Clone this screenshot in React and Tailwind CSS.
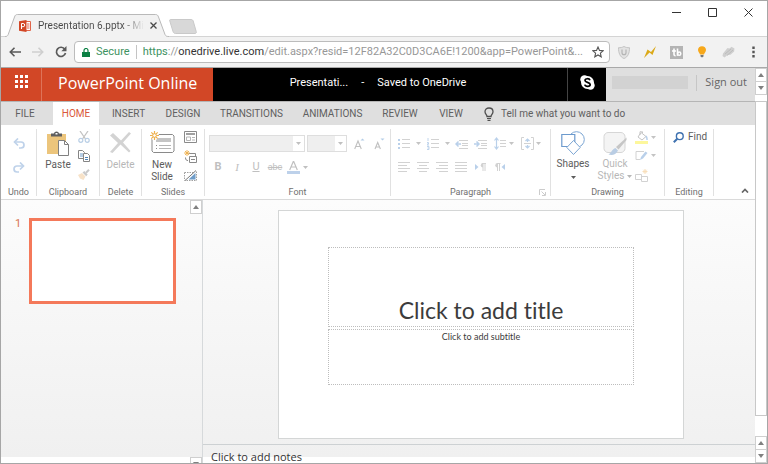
import { clsx } from "clsx"

const ribbonTabs = [
  { name: "FILE", width: "w-12" },
  { name: "HOME", width: "w-[46px]", active: true },
  { name: "INSERT", width: "w-[51px]" },
  { name: "DESIGN", width: "w-[50px]" },
  { name: "TRANSITIONS", width: "w-[79px]" },
  { name: "ANIMATIONS", width: "w-[75px]" },
  { name: "REVIEW", width: "w-[52px]" },
  { name: "VIEW", width: "w-[42px]" },
]

function Icon({ w, h, label, className, children }) {
  return (
    <svg
      width={w}
      height={h}
      viewBox={`0 0 ${w} ${h}`}
      fill="none"
      role={label ? "img" : undefined}
      aria-label={label}
      aria-hidden={label ? undefined : true}
      className={clsx("block shrink-0", className)}
    >
      {children}
    </svg>
  )
}

function Caret({ className }) {
  return (
    <Icon w={5} h={3} className={className}>
      <path d="M0 0h5L2.5 3z" fill="currentColor" />
    </Icon>
  )
}

function IconButton({ label, className, children }) {
  return (
    <button type="button" aria-label={label} className={clsx("flex shrink-0 items-center justify-center", className)}>
      {children}
    </button>
  )
}

function ScrollButton({ up, className }) {
  return (
    <button
      type="button"
      aria-label={up ? "Scroll up" : "Scroll down"}
      className={clsx("flex h-[14px] w-3 shrink-0 items-center justify-center border border-[#cfcfcf] bg-white", className)}
    >
      <Icon w={6} h={4}>
        <path d={up ? "M0 4h6L3 0z" : "M0 0h6L3 4z"} fill="#808080" />
      </Icon>
    </button>
  )
}

function PowerPointIcon() {
  return (
    <Icon w={13} h={12} className="mr-1.5">
      <path d="M6 1.500h5.500v9H6z" fill="#fff" stroke="#e0654a" />
      <path d="M8 4h2.500M8 6h2.500M8 8h2.500" stroke="#e0654a" />
      <path d="M0 1.200 7.500 0v12L0 10.800z" fill="#d24726" />
      <path d="M2.500 9V3.500h1.600a1.500 1.500 0 0 1 0 3.200H2.500" stroke="#fff" />
    </Icon>
  )
}

function TitleBar() {
  return (
    <div className="flex h-9 items-end border-b border-[#d4d4d4] bg-white pl-1">
      <div className="relative -mb-px flex h-[23px] w-[164px] items-center pl-[14px]">
        <svg viewBox="0 0 164 23" width="164" height="23" className="absolute inset-0" aria-hidden="true">
          <path d="M0 22.500c2 0 2.500-.5 3.200-2L9.500 3C10.200 1 11 .5 12.500.5h138c1.500 0 2.300.5 3 2.500l6.500 17.500c.7 1.500 1.500 2 4 2V23H0z" fill="#f2f2f2" />
          <path d="M0 22.500c2 0 2.500-.5 3.200-2L9.500 3C10.200 1 11 .5 12.500.5h138c1.500 0 2.300.5 3 2.500l6.500 17.500c.7 1.500 1.500 2 4 2" fill="none" stroke="#b9b9b9" />
        </svg>
        <div className="relative flex items-center">
          <PowerPointIcon />
          <span className="w-[106px] bg-linear-to-r from-[#484848] from-80% to-transparent bg-clip-text text-[10px] leading-4 whitespace-nowrap text-transparent">
            Presentation 6.pptx - Mic
          </span>
          <IconButton label="Close tab" className="ml-1.5">
            <Icon w={7} h={7}>
              <path d="m.5.500 6 6m0-6-6 6" stroke="#4a4a4a" strokeWidth="1.300" />
            </Icon>
          </IconButton>
        </div>
      </div>
      <IconButton label="New tab" className="mb-0.5">
        <Icon w={28} h={15}>
          <path d="M.8 2C.3 1 .8.500 2 .500h20c1.200 0 1.800.500 2.200 1.500l3 10.500c.4 1.200 0 2-1.200 2H6.500c-1.300 0-2-.6-2.400-1.700z" fill="#d8d8d8" stroke="#c9c9c9" />
        </Icon>
      </IconButton>
      <div className="mr-[14px] mb-[19px] ml-auto flex items-center gap-[27px]">
        <IconButton label="Minimize">
          <Icon w={9} h={9}>
            <path d="M0 4.500h9" stroke="#333" />
          </Icon>
        </IconButton>
        <IconButton label="Maximize">
          <Icon w={9} h={9}>
            <path d="M.5.500h8v8h-8z" stroke="#333" />
          </Icon>
        </IconButton>
        <IconButton label="Close">
          <Icon w={9} h={9}>
            <path d="m.5.500 8 8m0-8-8 8" stroke="#333" />
          </Icon>
        </IconButton>
      </div>
    </div>
  )
}

function AddressBar() {
  return (
    <div className="flex h-[31px] items-center border-b border-[#a9a9a9] bg-[#f2f2f2] pl-2">
      <div className="flex w-[65px] items-center gap-[11px]">
        <IconButton label="Back">
          <Icon w={12} h={10}>
            <path d="M12 5H1.500M5.500.8 1.300 5l4.200 4.200" stroke="#5a5a5a" strokeWidth="1.600" />
          </Icon>
        </IconButton>
        <IconButton label="Forward">
          <Icon w={12} h={10}>
            <path d="M0 5h10.500M6.500.8 10.700 5 6.500 9.200" stroke="#cfcfcf" strokeWidth="1.600" />
          </Icon>
        </IconButton>
        <IconButton label="Reload">
          <Icon w={12} h={12}>
            <path d="M9.800 3.200A4.600 4.600 0 1 0 10.500 7" stroke="#5a5a5a" strokeWidth="1.700" />
            <path d="M11.500 0v5.200H6.300z" fill="#5a5a5a" />
          </Icon>
        </IconButton>
      </div>
      <div className="flex h-[22px] min-w-0 flex-1 items-center rounded-sm border border-[#bcbcbc] bg-white px-[5px]">
        <Icon w={8} h={9} className="mr-1.5 ml-0.5">
          <path d="M0 4h8v5H0z" fill="#0b8043" />
          <path d="M2 4V2.500a2 2 0 0 1 4 0V4" stroke="#0b8043" strokeWidth="1.200" />
        </Icon>
        <span className="text-[11px] text-[#3d9261]">Secure</span>
        <span className="mx-[6px] h-3.5 w-px bg-[#c4c4c4]" />
        <span className="min-w-0 flex-1 overflow-hidden text-[11px] whitespace-nowrap text-[#979797]">
          <span className="text-[#3d9261]">https</span>://<span className="text-[#333]">onedrive.live.com</span>
          /edit.aspx?resid=12F82A32C0D3CA6E!1200&amp;app=PowerPoint&amp;...
        </span>
        <IconButton label="Bookmark this page">
          <Icon w={12} h={12}>
            <path d="m6 1 1.500 3.400 3.600.4-2.700 2.400.8 3.600L6 9l-3.200 1.800.8-3.600L.9 4.800l3.600-.4z" stroke="#555" strokeWidth="1.100" />
          </Icon>
        </IconButton>
      </div>
      <div className="flex items-center pr-3 pl-[7px]">
        <IconButton label="Shield" className="w-[14px]">
          <Icon w={12} h={13}>
            <path d="M6 .5c1.600 1 3.500 1.300 5.500 1.200C11.500 7 10 11 6 12.500 2 11 .5 7 .5 1.700 2.500 1.800 4.400 1.500 6 .5z" fill="#e3e3e3" stroke="#c3c3c3" />
            <path d="M4 3.500v3.200c0 2.600 4 2.600 4 0V3.500" stroke="#b5b5b5" strokeWidth="1.200" />
          </Icon>
        </IconButton>
        <IconButton label="Lightning" className="ml-3 w-[14px]">
          <Icon w={12} h={12}>
            <path d="m0 12 3.500-8.500L7 6 12 0 8.500 9 5.500 6.500z" fill="#dba918" />
          </Icon>
        </IconButton>
        <IconButton label="Toolbox" className="ml-3 w-[14px]">
          <Icon w={13} h={13}>
            <path d="M0 0h13v13H0z" fill="#b4b4b4" />
            <path d="M4 2.500v6c0 1 .6 1.200 1.600 1.200M2 5h4" stroke="#fff" strokeWidth="1.600" />
            <path d="M7.500 2.500V9.800" stroke="#fff" strokeWidth="1.600" />
            <circle cx="9.200" cy="7.700" r="1.600" stroke="#fff" strokeWidth="1.500" />
          </Icon>
        </IconButton>
        <IconButton label="Bulb" className="ml-3 w-[14px]">
          <Icon w={10} h={12}>
            <path d="M5 .3c2.400 0 4 1.500 4 3.600C9 6 7.200 6.800 7 8.500H3C2.800 6.800 1 6 1 3.900 1 1.800 2.600.3 5 .3z" fill="#f7a81b" />
            <path d="M3.500 9h3v1.500l-1.500 1-1.500-1z" fill="#777" />
          </Icon>
        </IconButton>
        <IconButton label="Plug-in" className="ml-3 w-[14px]">
          <Icon w={13} h={12}>
            <path d="M1 7.500 5.500 2l2 .5L9.500.8l3 1.700-.4 3-3.600 3.200L5.500 9l-3 2.500L.5 10z" fill="#cfcfcf" />
            <path d="m3 8 6-5M5 9.500 11 4" stroke="#bdbdbd" />
          </Icon>
        </IconButton>
        <IconButton label="Menu" className="ml-[17px]">
          <Icon w={3} h={12}>
            <path d="M.3.500h2.400v2.400H.3zM.3 4.800h2.400v2.400H.3zM.3 9.100h2.400v2.400H.3z" fill="#555" />
          </Icon>
        </IconButton>
      </div>
    </div>
  )
}

function AppHeader() {
  return (
    <header className="flex h-[34px] border-b border-[#b5b5b5] bg-[#dfdfdf] text-white">
      <div className="flex w-[212px] shrink-0 bg-[#d24726]">
        <IconButton label="App launcher" className="w-[41px] border-r border-[#de7359] pb-1.5">
          <Icon w={13} h={13}>
            <path
              d="M0 0h3v3H0zM5 0h3v3H5zM10 0h3v3h-3zM0 5h3v3H0zM5 5h3v3H5zM10 5h3v3h-3zM0 10h3v3H0zM5 10h3v3H5zM10 10h3v3h-3z"
              fill="#fff"
            />
          </Icon>
        </IconButton>
        <h1 className="self-center pb-1 pl-4 font-['Open_Sans',sans-serif] text-[16px] leading-5 whitespace-nowrap">PowerPoint Online</h1>
      </div>
      <div className="flex min-w-0 flex-1 items-center justify-center gap-[13px] bg-black pr-6 pb-0.5 text-[11px] whitespace-nowrap">
        <span>Presentati...</span>
        <span>-</span>
        <span>Saved to OneDrive</span>
      </div>
      <IconButton label="Skype" className="w-[39px] border-l border-[#444] bg-black pb-1">
        <Icon w={15} h={15}>
          <circle cx="4.500" cy="4.500" r="4.200" fill="#fff" />
          <circle cx="10.500" cy="10.500" r="4.200" fill="#fff" />
          <circle cx="7.500" cy="7.500" r="6.500" fill="#fff" />
          <path d="M10 5.200C9.400 3.200 5 3.200 5 5.400c0 2.300 5.200 1.600 5.200 4.100 0 2.400-4.900 2.400-5.400.1" stroke="#000" strokeWidth="1.700" />
        </Icon>
      </IconButton>
      <div className="flex w-[149px] shrink-0 items-center pr-2 pb-1 pl-1.5 text-[11px] text-[#666]">
        <span className="h-[13px] flex-1 bg-[#d2d2d2]" />
        <span className="mx-2 h-4 w-px bg-[#c6c6c6]" />
        <a href="#signout" className="font-['Open_Sans',sans-serif] whitespace-nowrap">Sign out</a>
      </div>
    </header>
  )
}

function RibbonTabs() {
  return (
    <nav className="flex h-[23px] gap-1 bg-[#dfdfdf] text-[10px] text-[#606060]">
      {ribbonTabs.map((tab) => (
        <button
          key={tab.name}
          type="button"
          className={clsx("flex shrink-0 items-center justify-center", tab.width, tab.active && "bg-white text-[#d9583b]")}
        >
          {tab.name}
        </button>
      ))}
      <button type="button" className="ml-2 flex items-center gap-[7px] whitespace-nowrap">
        <Icon w={10} h={14}>
          <path d="M3 9.500C3 7.500 1 7 1 4.700 1 2.500 2.700 1 5 1s4 1.500 4 3.700C9 7 7 7.500 7 9.500z" stroke="#4f4f4f" strokeWidth="1.300" />
          <path d="M3 11.500h4M3.500 13.300h3" stroke="#4f4f4f" strokeWidth="1.200" />
        </Icon>
        Tell me what you want to do
      </button>
    </nav>
  )
}

function Group({ name, width, launcher, children }) {
  return (
    <section aria-label={name} className={clsx("relative flex shrink-0 flex-col border-r border-[#e1e1e1]", width)}>
      <div className="flex-1">{children}</div>
      <div className="text-center text-[9px] leading-2 whitespace-nowrap text-[#707070]">{name}</div>
      {launcher && (
        <IconButton label={`${name} options`} className="absolute right-1 bottom-0">
          <Icon w={7} h={7}>
            <path d="M.5 6V.5H6M2.500 2.500 6 6M6.500 3v3.500H3" stroke="#ccc" />
          </Icon>
        </IconButton>
      )}
    </section>
  )
}

function PasteIcon() {
  return (
    <Icon w={24} h={25}>
      <path d="M1 3h19v20H1z" fill="#ecc57c" />
      <path d="M5 2.500h3C8.300-.3 12.700-.3 13 2.500h3v3H5z" fill="#5f5f5f" />
      <path d="M9.500 2h2v1.500h-2z" fill="#fff" />
      <path d="M12.500 9.500h6l4 4v11h-10z" fill="#fff" stroke="#808080" />
      <path d="M18.500 9.500v4h4" stroke="#808080" />
    </Icon>
  )
}

function CutIcon() {
  return (
    <Icon w={12} h={12}>
      <path d="m2 0 5.500 8M10 0 4.500 8" stroke="#c3c3c3" strokeWidth="1.300" />
      <circle cx="2.800" cy="9.300" r="2" stroke="#b9cfe6" strokeWidth="1.200" />
      <circle cx="9.200" cy="9.300" r="2" stroke="#b9cfe6" strokeWidth="1.200" />
    </Icon>
  )
}

function CopyIcon() {
  return (
    <Icon w={12} h={12}>
      <path d="M.5.500h4l2 2v6h-6z" fill="#fff" stroke="#858585" />
      <path d="M2 4h3M2 6h3" stroke="#6b9aca" />
      <path d="M5.500 3.500h4l2 2v6h-6z" fill="#fff" stroke="#858585" />
      <path d="M7 7.500h3M7 9.500h3" stroke="#4e83b8" />
    </Icon>
  )
}

function PainterIcon() {
  return (
    <Icon w={12} h={11}>
      <path d="m0 6 4-2 3.500 3.500L5.500 11 2 9.500z" fill="#f7e2c8" />
      <path d="m4.500 3.500 3.700 3.700 1.500-1.700L6.300 2z" fill="#c9c9c9" />
      <path d="m8 3.700 3-3" stroke="#c9c9c9" strokeWidth="2" />
    </Icon>
  )
}

function NewSlideIcon() {
  return (
    <Icon w={25} h={22}>
      <path d="M2.500 3.500h20l1.500 1.500v15l-1.500 1.500H3.500L2 20V5z" fill="#fff" stroke="#8a8a8a" />
      <path d="M6 7h15v4H6z" fill="#c4c4c4" />
      <path d="M9 14.500h12M9 17.500h12" stroke="#b5b5b5" />
      <path d="M6 14.500h1M6 17.500h1" stroke="#8a8a8a" />
      <circle cx="4.500" cy="4.500" r="4.500" fill="#fff" />
      <path d="M4.500 0v9M0 4.500h9M1.300 1.300l6.400 6.400M7.700 1.300 1.300 7.700" stroke="#eeb04d" strokeWidth="1.200" />
      <circle cx="4.500" cy="4.500" r="1.800" fill="#fff" stroke="#eeb04d" />
    </Icon>
  )
}

function LayoutIcon() {
  return (
    <Icon w={13} h={12}>
      <path d="M.5.500h12v11H.5z" fill="#fff" stroke="#8a8a8a" />
      <path d="M2 2h9v2H2z" fill="#a0a0a0" />
      <path d="M2.500 6h4v3.500h-4z" stroke="#b5b5b5" />
      <path d="M8 6.500h3M8 9h3" stroke="#b5b5b5" />
    </Icon>
  )
}

function ResetIcon() {
  return (
    <Icon w={13} h={13}>
      <path d="M4.500 3.500h7v3M5.500 6.500h7v6h-7z" fill="#fff" stroke="#8a8a8a" />
      <path d="M7 9.500h4" stroke="#8a8a8a" />
      <path d="M3 0v6M0 3h6M1 1l4 4M5 1 1 5" stroke="#eeb04d" strokeWidth=".9" />
      <path d="M1.500 7.500C1.500 10 2.500 10.500 4 10.500" stroke="#8a8a8a" />
    </Icon>
  )
}

function HideIcon() {
  return (
    <Icon w={13} h={11}>
      <path d="M.5 2.500h9M.5 2.500v8h12V1" stroke="#a0a0a0" strokeDasharray="1.500 1" />
      <path d="M11.500 3v6.500h-7z" fill="#6f9cc8" />
      <path d="M1 10.500 12 .5" stroke="#777" />
    </Icon>
  )
}

function UndoGroup() {
  return (
    <Group name="Undo" width="w-[36px]">
      <div className="flex flex-col items-center gap-[13px] pt-[9px]">
        <IconButton label="Undo">
          <Icon w={12} h={11}>
            <path d="M1.500 4H8c4 0 4 6 0 6H6" stroke="#bfd2ea" strokeWidth="1.700" />
            <path d="M5 .5 1.500 4 5 7.500" stroke="#bfd2ea" strokeWidth="1.700" />
          </Icon>
        </IconButton>
        <IconButton label="Redo">
          <Icon w={12} h={11}>
            <path d="M10.500 4H4C0 4 0 10 4 10h2" stroke="#bfd2ea" strokeWidth="1.700" />
            <path d="M7 .5 10.500 4 7 7.500" stroke="#bfd2ea" strokeWidth="1.700" />
          </Icon>
        </IconButton>
      </div>
    </Group>
  )
}

function ClipboardGroup() {
  return (
    <Group name="Clipboard" width="w-[63px]">
      <div className="flex justify-center gap-2 pt-0.5">
        <button type="button" className="flex w-6 flex-col items-center gap-[3px] text-[10px] leading-3">
          <PasteIcon />
          Paste
        </button>
        <div className="flex flex-col gap-[7px]">
          <IconButton label="Cut"><CutIcon /></IconButton>
          <IconButton label="Copy"><CopyIcon /></IconButton>
          <IconButton label="Format painter"><PainterIcon /></IconButton>
        </div>
      </div>
    </Group>
  )
}

function SlidesGroup() {
  return (
    <Group name="Slides" width="w-[63px]">
      <div className="flex justify-center gap-[9px] pt-0.5">
        <button type="button" className="flex flex-col items-center gap-1.5 text-[10px] leading-3">
          <NewSlideIcon />
          <span>New<br />Slide</span>
        </button>
        <div className="flex flex-col gap-[7px]">
          <IconButton label="Layout"><LayoutIcon /></IconButton>
          <IconButton label="Reset"><ResetIcon /></IconButton>
          <IconButton label="Hide slide"><HideIcon /></IconButton>
        </div>
      </div>
    </Group>
  )
}

function DisabledSelect({ label, width }) {
  return (
    <div className={clsx("flex h-[17px] items-center border border-[#dedede]", width)}>
      <select disabled aria-label={label} className="h-full min-w-0 flex-1 appearance-none bg-[#efefef]">
        <option value="" />
      </select>
      <Caret className="mx-[3px] text-[#c0c0c0]" />
    </div>
  )
}

function FontGroup() {
  return (
    <Group name="Font" width="w-[186px]">
      <div className="flex items-center gap-0.5 pt-1.5 pl-1 text-[#c0c0c0]">
        <DisabledSelect label="Font name" width="w-24" />
        <DisabledSelect label="Font size" width="w-10" />
        <IconButton label="Grow font" className="ml-1 w-3">
          <Icon w={11} h={12}>
            <path d="M.7 11 4 3l3.300 8M2 8.500h4" stroke="#c0c0c0" strokeWidth="1.100" />
            <path d="M6.500 2.500h4L8.500.5z" fill="#b3cde8" />
          </Icon>
        </IconButton>
        <IconButton label="Shrink font" className="ml-1.5 w-3">
          <Icon w={11} h={12}>
            <path d="M1 11 3.700 4.500 6.400 11M2.200 9h3" stroke="#c0c0c0" strokeWidth="1.100" />
            <path d="M6.500.500h4l-2 2z" fill="#b3cde8" />
          </Icon>
        </IconButton>
      </div>
      <div className="flex items-center pt-2 pl-1 text-[11px] leading-[14px] text-[#c0c0c0]">
        <button type="button" className="w-[18px] font-bold">B</button>
        <button type="button" className="w-5 font-['Liberation_Serif',serif] italic">I</button>
        <button type="button" className="w-[18px] underline">U</button>
        <button type="button" className="w-5 text-[9px] line-through">abc</button>
        <IconButton label="Font color" className="ml-0.5 gap-[3px]">
          <Icon w={13} h={13}>
            <path d="M2.700 9 6.500 0l3.800 9M4 6h5" stroke="#c0c0c0" strokeWidth="1.200" />
            <path d="M0 10h13v3H0z" fill="#bdd1ea" />
          </Icon>
          <Caret className="text-[#c0c0c0]" />
        </IconButton>
      </div>
    </Group>
  )
}

const gray = "#d2d2d2"
const blue = "#b9d0ea"

function AlignIcon({ d }) {
  return (
    <Icon w={12} h={10}>
      <path d={d} stroke={gray} />
    </Icon>
  )
}

function ParagraphGroup() {
  return (
    <Group name="Paragraph" width="w-[160px]" launcher>
      <div className="flex items-center pt-2 pl-[7px] text-[#c4c4c4]">
        <IconButton label="Bullets" className="w-[29px] justify-start gap-1.5">
          <Icon w={12} h={12}>
            <path d="M0 1h2v2H0zM0 5h2v2H0zM0 9h2v2H0z" fill={blue} />
            <path d="M4 1.500h8M4 5.500h8M4 9.500h8" stroke={gray} />
          </Icon>
          <Caret />
        </IconButton>
        <IconButton label="Numbering" className="w-[28px] justify-start gap-1.5">
          <Icon w={12} h={12}>
            <path d="M1 0v3M0 4.500h1.500v1.500H0v1h2M0 8.500h2v3H0M.5 10H2" stroke={blue} strokeWidth=".9" />
            <path d="M4 1.500h8M4 5.500h8M4 9.500h8" stroke={gray} />
          </Icon>
          <Caret />
        </IconButton>
        <IconButton label="Decrease indent" className="mr-1.5">
          <Icon w={13} h={10}>
            <path d="M4 1.500h9M7 4.500h6M7 6.500h6M4 9.500h9" stroke={gray} />
            <path d="M6 5H1M3.500 2.500 1 5l2.500 2.500" stroke={blue} strokeWidth="1.500" />
          </Icon>
        </IconButton>
        <IconButton label="Increase indent" className="mr-[7px]">
          <Icon w={13} h={10}>
            <path d="M4 1.500h9M7 4.500h6M7 6.500h6M4 9.500h9" stroke={gray} />
            <path d="M0 5h5M2.500 2.500 5 5 2.500 7.500" stroke={blue} strokeWidth="1.500" />
          </Icon>
        </IconButton>
        <IconButton label="Line spacing" className="w-[27px] justify-start gap-[3px]">
          <Icon w={12} h={13}>
            <path d="M2.500 1.500v10M.5 3.500l2-2.500 2 2.500M.5 9.500l2 2.500 2-2.500" stroke={blue} strokeWidth="1.200" />
            <path d="M6 3.500h6M6 6.500h6M6 9.500h6" stroke={gray} />
          </Icon>
          <Caret />
        </IconButton>
        <IconButton label="Align text" className="gap-0.5">
          <Icon w={13} h={13}>
            <path d="M3 .5H.5v12H3M10 .5h2.500v12H10M3 6.500h7" stroke={gray} />
            <path d="M6.500 2v3M4.500 4l2-2 2 2M6.500 8v3M4.500 9l2 2 2-2" stroke={blue} strokeWidth="1.200" />
          </Icon>
          <Caret />
        </IconButton>
      </div>
      <div className="flex items-center gap-[7px] pt-3 pl-[7px]">
        <IconButton label="Align left"><AlignIcon d="M0 .5h12M0 3.500h9M0 6.500h12M0 9.500h9" /></IconButton>
        <IconButton label="Center"><AlignIcon d="M0 .5h12M2 3.500h8M0 6.500h12M2 9.500h8" /></IconButton>
        <IconButton label="Align right"><AlignIcon d="M0 .5h12M3 3.500h9M0 6.500h12M3 9.500h9" /></IconButton>
        <IconButton label="Justify"><AlignIcon d="M0 .5h12M0 3.500h12M0 6.500h12M0 9.500h12" /></IconButton>
        <IconButton label="Left to right" className="ml-px">
          <Icon w={11} h={8}>
            <path d="M0 1v6l3.500-3z" fill={blue} />
            <path d="M8 8V.5M10 8V.5M11 .5H7" stroke={gray} />
            <path d="M8 0a2.200 2.200 0 0 0 0 4.400z" fill={gray} />
          </Icon>
        </IconButton>
        <IconButton label="Right to left" className="ml-px">
          <Icon w={11} h={8}>
            <path d="M11 1v6L7.500 4z" fill={blue} />
            <path d="M3.500 8V.5M5.500 8V.5M6.500.500H3" stroke={gray} />
            <path d="M3.500 0a2.200 2.200 0 0 0 0 4.400z" fill={gray} />
          </Icon>
        </IconButton>
      </div>
    </Group>
  )
}

function DrawingGroup() {
  return (
    <Group name="Drawing" width="w-[114px]">
      <div className="flex pt-0.5 pl-1.5">
        <button type="button" className="flex w-8 flex-col items-center text-[10px] leading-3">
          <Icon w={24} h={24}>
            <circle cx="15.500" cy="8.500" r="7.800" fill="#fff" stroke="#7ba5d3" />
            <path d="M.8 3.500h13v12H.8z" fill="#fff" stroke="#6c9acd" strokeWidth="1.200" />
            <path d="m12.500 9.500 6.700 7-6.700 7-6.700-7z" fill="#fff" stroke="#7ba5d3" />
          </Icon>
          <span className="mt-[3px]">Shapes</span>
          <Caret className="mt-1.5" />
        </button>
        <button type="button" className="ml-2.5 flex w-8 flex-col items-center text-[10px] leading-3 text-[#b7b7b7]">
          <Icon w={24} h={25}>
            <path d="M5 1.500h13c2 0 4 2 4 4v12c0 2-2 4-4 4H5c-2 0-4-2-4-4v-12c0-2 2-4 4-4z" fill="#f4f4f4" stroke="#d6d6d6" />
            <path d="m13 16 2.500 2.500L23.500 9V6.500z" fill="#c6c6c6" />
            <path d="M12.500 17 15 19.500C13 24 9 24.500 5.500 23.500 8.500 22 9 18 12.500 17z" fill="#b9cde4" />
          </Icon>
          <span className="mt-0.5">Quick</span>
          <span className="flex items-center gap-[3px]">
            Styles
            <Caret />
          </span>
        </button>
        <div className="ml-1 flex flex-col gap-1.5 text-[#c4c4c4]">
          <IconButton label="Shape fill" className="gap-[3px]">
            <Icon w={13} h={13}>
              <path d="m6 1.500 5 4-4 3.500-4-3zM5 4V1a1.300 1.300 0 0 1 2.500 0v1" stroke="#c4c4c4" />
              <path d="M11 5c1 1.500 1.200 2.500 1 4" stroke={blue} strokeWidth="1.500" />
              <path d="M0 10h13v3H0z" fill="#fdf79c" />
            </Icon>
            <Caret />
          </IconButton>
          <IconButton label="Shape outline" className="gap-[3px]">
            <Icon w={13} h={11}>
              <path d="M9 1.500H1v8h4" stroke={gray} />
              <path d="m6 7 4.500-5.500 2 1.500L8 8.500 5 10z" fill={blue} />
            </Icon>
            <Caret />
          </IconButton>
          <IconButton label="Arrange" className="mt-0.5 justify-start">
            <Icon w={13} h={13}>
              <path d="M.5 5.500h6v5h-6zM6.500 7.500h6v5h-6z" fill="#fff" stroke={gray} />
              <path d="M10 0v5M7.500 2.500h5M8.300.8l3.400 3.400M11.700.8 8.300 4.200" stroke="#f8dfbb" />
            </Icon>
          </IconButton>
        </div>
      </div>
    </Group>
  )
}

function Ribbon() {
  return (
    <div className="flex border-b border-[#dadada] bg-white pt-1 pb-[3px] text-[#5c5c5c]">
      <div className="flex h-[67px] min-w-0 flex-1">
        <UndoGroup />
        <ClipboardGroup />
        <Group name="Delete" width="w-[42px]">
          <button type="button" className="flex w-full flex-col items-center pt-[3px] text-[10px] leading-3 text-[#b7b7b7]">
            <Icon w={23} h={22}>
              <path d="M1 3.500 4 1l8 7.500L20 0l2 1.500-8 9 7.500 8.500-1.500 1.500-8.500-8-8 8.500L1 20l8-9z" fill="#d3d3d3" />
            </Icon>
            <span className="mt-[5px]">Delete</span>
          </button>
        </Group>
        <SlidesGroup />
        <FontGroup />
        <ParagraphGroup />
        <DrawingGroup />
        <Group name="Editing" width="w-[49px]">
          <button type="button" className="flex items-center gap-1 pt-0.5 pl-2 text-[10px] leading-3">
            <Icon w={11} h={11}>
              <circle cx="6.800" cy="4.200" r="3.400" stroke="#3f72b0" strokeWidth="1.400" />
              <path d="M4.300 6.700.8 10.200" stroke="#3f72b0" strokeWidth="2" />
            </Icon>
            Find
          </button>
        </Group>
        <IconButton label="Collapse ribbon" className="mt-auto mr-1.5 mb-[3px] ml-auto">
          <Icon w={8} h={5}>
            <path d="m1 4.500 3-3 3 3" stroke="#666" strokeWidth="1.700" />
          </Icon>
        </IconButton>
      </div>
    </div>
  )
}

function Workspace() {
  return (
    <main className="flex min-h-0 flex-1 overflow-hidden bg-[linear-gradient(#fcfcfc,#f0f0f0_calc(100%_-_6px),#fff_calc(100%_-_6px))]">
      <aside className="flex w-[202px] shrink-0 justify-between border-r border-[#d6d9db]">
        <div className="flex gap-[7px] pt-[18px] pl-[14px]">
          <span className="w-[7px] text-[11px] leading-3 text-[#d9744f]">1</span>
          <button type="button" aria-label="Slide 1" className="h-[86px] w-[147px] border-[3px] border-[#f4795a] bg-white" />
        </div>
        <div className="flex flex-col justify-between">
          <ScrollButton up />
          <ScrollButton className="-mb-2" />
        </div>
      </aside>
      <div className="flex min-w-0 flex-1 flex-col">
        <div className="flex flex-1 justify-center pt-2.5 pl-1">
          <div className="flex h-[229px] w-[406px] flex-col items-center gap-0.5 border border-[#d4d6d6] bg-white pt-9 font-['Lato',sans-serif] text-[#3c3c3c] [font-variant-ligatures:none]">
            <div className="flex h-20 w-[306px] items-end justify-center border border-dotted border-[#bdbdbd] text-[23px] leading-8">
              Click to add title
            </div>
            <div className="h-14 w-[306px] border border-dotted border-[#bdbdbd] text-center text-[9px] leading-[14px]">
              Click to add subtitle
            </div>
          </div>
        </div>
        <div className="h-[19px] border-t border-[#cdd1d3] pl-2 font-['Open_Sans',sans-serif] text-[11px] leading-[23px] text-[#333]">
          Click to add notes
        </div>
      </div>
    </main>
  )
}

export default function App() {
  return (
    <div className="flex h-screen flex-col overflow-hidden border border-[#a6a6a6] bg-white font-['Roboto',sans-serif]">
      <TitleBar />
      <AddressBar />
      <div className="flex min-h-0 flex-1">
        <div className="flex min-w-0 flex-1 flex-col">
          <AppHeader />
          <RibbonTabs />
          <Ribbon />
          <Workspace />
        </div>
        <div className="flex w-3 shrink-0 flex-col bg-white">
          <ScrollButton up />
          <ScrollButton className="-mt-px" />
          <div className="mt-1.5 mb-5 flex-1 border border-[#c8c8c8] bg-white" />
          <ScrollButton up />
          <ScrollButton className="-mt-px" />
        </div>
      </div>
    </div>
  )
}
